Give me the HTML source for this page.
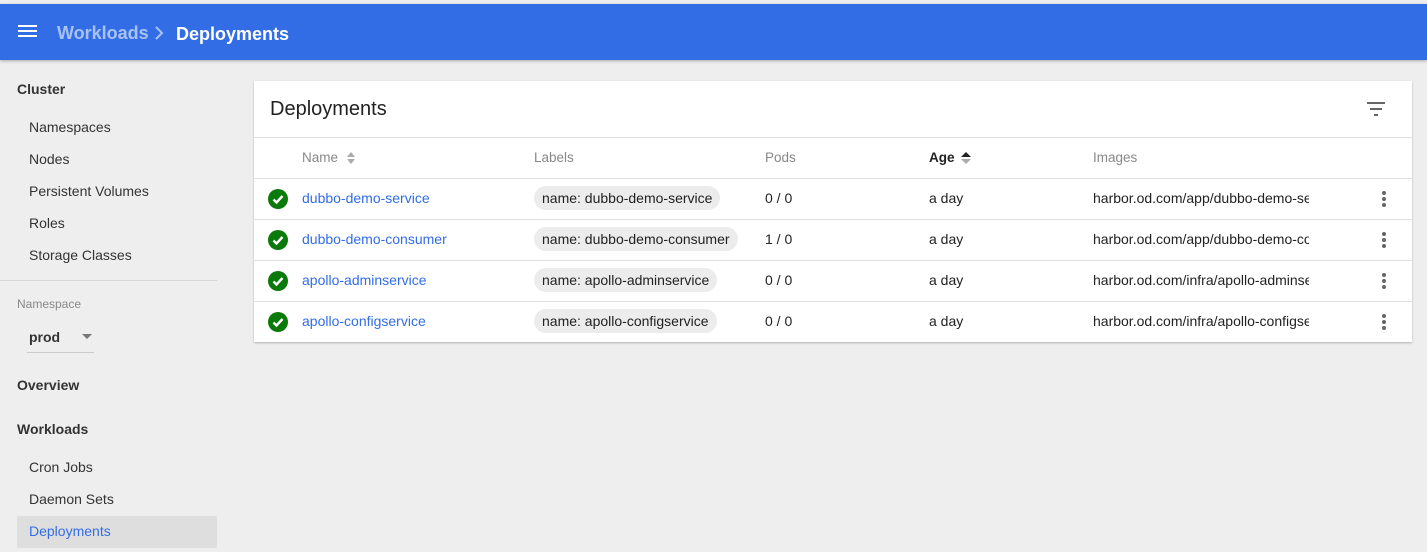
<!DOCTYPE html>
<html><head><style>
*{margin:0;padding:0;box-sizing:border-box}
body{width:1427px;height:552px;background:#eeeeee;font-family:"Liberation Sans",sans-serif;position:relative;overflow:hidden;color:#222}
.a{position:absolute;white-space:nowrap}
.top{position:absolute;left:0;top:4px;width:1427px;height:56px;background:#326de6;box-shadow:0 1px 3px rgba(0,0,0,.3)}
.side{font-size:14px;color:#333}
.card{position:absolute;left:254px;top:81px;width:1158px;height:261px;background:#fff;box-shadow:0 1px 2px rgba(0,0,0,.25)}
.hl{position:absolute;left:0;width:1158px;height:1px;background:#e0e0e0}
.th{font-size:13.5px;color:#888;top:69px}
.cell{font-size:14px;color:#222}
.link{color:#326de6}
.chip{position:absolute;height:24px;border-radius:12px;background:#ececec;font-size:14px;line-height:24px;padding:0 8px;color:#222}
.chk{position:absolute;left:14px;width:20px;height:20px;border-radius:50%;background:#0a7a0a}
.dots{position:absolute;left:1128px;width:4px}
.dots i{display:block;width:4px;height:4px;border-radius:2px;background:#666;margin-bottom:2px}
</style></head><body>
<div class="top">
 <div class="a" style="left:18px;top:21px;width:19px;height:2px;background:#fff;box-shadow:0 5px 0 #fff,0 10px 0 #fff"></div>
 <div class="a" style="left:57px;top:19px;font-size:18px;font-weight:bold;color:#a9c2f4">Workloads</div>
 <svg class="a" style="left:154px;top:22px" width="10" height="14"><path d="M2 1l6 6-6 6" stroke="#a9c2f4" stroke-width="2" fill="none"/></svg>
 <div class="a" style="left:176px;top:20px;font-size:18px;font-weight:bold;color:#fff">Deployments</div>
</div>
<div class="a side" style="left:17px;top:81px;font-weight:bold;font-size:14px">Cluster</div>
<div class="a side" style="left:29px;top:119px">Namespaces</div>
<div class="a side" style="left:29px;top:151px">Nodes</div>
<div class="a side" style="left:29px;top:183px">Persistent Volumes</div>
<div class="a side" style="left:29px;top:215px">Roles</div>
<div class="a side" style="left:29px;top:247px">Storage Classes</div>
<div class="a" style="left:0;top:280px;width:217px;height:1px;background:#d6d6d6"></div>
<div class="a" style="left:17px;top:297px;font-size:12px;color:#888">Namespace</div>
<div class="a side" style="left:29px;top:329px;font-size:14px;font-weight:bold;color:#333">prod</div>
<div class="a" style="left:82px;top:334px;border-left:5px solid transparent;border-right:5px solid transparent;border-top:5px solid #777"></div>
<div class="a" style="left:27px;top:352px;width:67px;height:1px;background:#ccc"></div>
<div class="a side" style="left:17px;top:377px;font-weight:bold">Overview</div>
<div class="a side" style="left:17px;top:421px;font-weight:bold">Workloads</div>
<div class="a side" style="left:29px;top:459px">Cron Jobs</div>
<div class="a side" style="left:29px;top:491px">Daemon Sets</div>
<div class="a" style="left:17px;top:516px;width:200px;height:32px;background:#dedede;border-radius:2px"></div>
<div class="a side" style="left:29px;top:523px;color:#326de6">Deployments</div>

<div class="card">
 <div class="a" style="left:16px;top:17px;font-size:20px;color:#222">Deployments</div>
 <div class="a" style="left:1113px;top:21px;width:18px;height:2px;background:#666"></div>
 <div class="a" style="left:1116px;top:27px;width:12px;height:2px;background:#666"></div>
 <div class="a" style="left:1120px;top:33px;width:4px;height:2px;background:#666"></div>
 <div class="hl" style="top:56px"></div>
 <div class="a th" style="left:48px">Name</div>
 <div class="a" style="left:93px;top:71px;border-left:4px solid transparent;border-right:4px solid transparent;border-bottom:5px solid #aaa"></div>
 <div class="a" style="left:93px;top:78px;border-left:4px solid transparent;border-right:4px solid transparent;border-top:5px solid #aaa"></div>
 <div class="a th" style="left:280px">Labels</div>
 <div class="a th" style="left:511px">Pods</div>
 <div class="a th" style="left:675px;color:#222;font-weight:bold">Age</div>
 <div class="a" style="left:707px;top:71px;border-left:5px solid transparent;border-right:5px solid transparent;border-bottom:5px solid #222"></div>
 <div class="a" style="left:707px;top:78px;border-left:5px solid transparent;border-right:5px solid transparent;border-top:5px solid #aaa"></div>
 <div class="a th" style="left:839px">Images</div>
 <div class="hl" style="top:97px"></div>
 <div class="hl" style="top:138px"></div>
 <div class="hl" style="top:179px"></div>
 <div class="hl" style="top:220px"></div>

 <div class="chk" style="top:108px"><svg width="20" height="20"><path d="M5.5 10.5l3 3 6-6.5" stroke="#fff" stroke-width="2.4" fill="none"/></svg></div>
 <div class="a cell link" style="left:48px;top:109px">dubbo-demo-service</div>
 <div class="chip" style="left:280px;top:105px">name: dubbo-demo-service</div>
 <div class="a cell" style="left:511px;top:109px">0 / 0</div>
 <div class="a cell" style="left:675px;top:109px">a day</div>
 <div class="a cell" style="left:839px;top:109px;width:216px;overflow:hidden">harbor.od.com/app/dubbo-demo-service</div>
 <div class="dots" style="top:110px"><i></i><i></i><i></i></div>

 <div class="chk" style="top:149px"><svg width="20" height="20"><path d="M5.5 10.5l3 3 6-6.5" stroke="#fff" stroke-width="2.4" fill="none"/></svg></div>
 <div class="a cell link" style="left:48px;top:150px">dubbo-demo-consumer</div>
 <div class="chip" style="left:280px;top:146px">name: dubbo-demo-consumer</div>
 <div class="a cell" style="left:511px;top:150px">1 / 0</div>
 <div class="a cell" style="left:675px;top:150px">a day</div>
 <div class="a cell" style="left:839px;top:150px;width:216px;overflow:hidden">harbor.od.com/app/dubbo-demo-consumer</div>
 <div class="dots" style="top:151px"><i></i><i></i><i></i></div>

 <div class="chk" style="top:190px"><svg width="20" height="20"><path d="M5.5 10.5l3 3 6-6.5" stroke="#fff" stroke-width="2.4" fill="none"/></svg></div>
 <div class="a cell link" style="left:48px;top:191px">apollo-adminservice</div>
 <div class="chip" style="left:280px;top:187px">name: apollo-adminservice</div>
 <div class="a cell" style="left:511px;top:191px">0 / 0</div>
 <div class="a cell" style="left:675px;top:191px">a day</div>
 <div class="a cell" style="left:839px;top:191px;width:216px;overflow:hidden">harbor.od.com/infra/apollo-adminservice</div>
 <div class="dots" style="top:192px"><i></i><i></i><i></i></div>

 <div class="chk" style="top:231px"><svg width="20" height="20"><path d="M5.5 10.5l3 3 6-6.5" stroke="#fff" stroke-width="2.4" fill="none"/></svg></div>
 <div class="a cell link" style="left:48px;top:232px">apollo-configservice</div>
 <div class="chip" style="left:280px;top:228px">name: apollo-configservice</div>
 <div class="a cell" style="left:511px;top:232px">0 / 0</div>
 <div class="a cell" style="left:675px;top:232px">a day</div>
 <div class="a cell" style="left:839px;top:232px;width:216px;overflow:hidden">harbor.od.com/infra/apollo-configservice</div>
 <div class="dots" style="top:233px"><i></i><i></i><i></i></div>
</div>
</body></html>
